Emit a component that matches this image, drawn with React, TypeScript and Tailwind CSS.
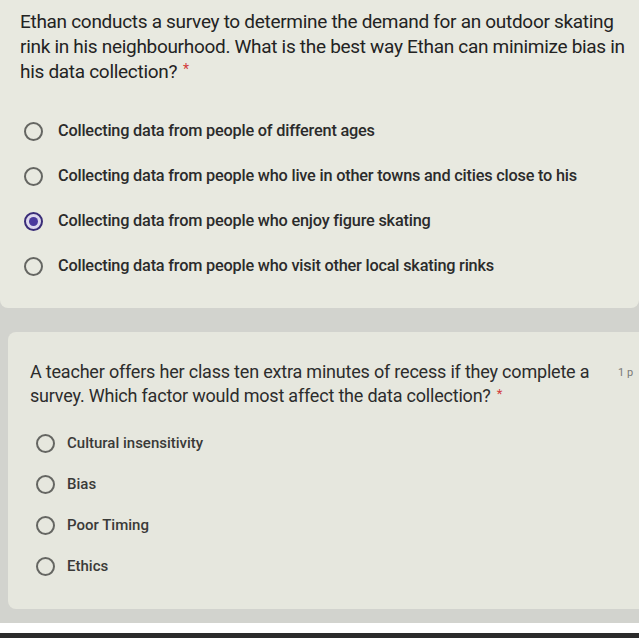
import React from 'react';

const q1Options = [
  'Collecting data from people of different ages',
  'Collecting data from people who live in other towns and cities close to his',
  'Collecting data from people who enjoy figure skating',
  'Collecting data from people who visit other local skating rinks',
];

const q2Options = ['Cultural insensitivity', 'Bias', 'Poor Timing', 'Ethics'];

const Radio: React.FC<{ checked?: boolean }> = ({ checked }) =>
  checked ? (
    <span className="flex h-[19px] w-[19px] shrink-0 items-center justify-center rounded-full border-[2.5px] border-[#3a2d78] bg-[#ddd8ee]">
      <span className="h-[9px] w-[9px] rounded-full bg-[#4b3a9e]" />
    </span>
  ) : (
    <span className="h-[19px] w-[19px] shrink-0 rounded-full border-2 border-[#656662]" />
  );

const App: React.FC = () => {
  return (
    <div className="flex h-[638px] w-[639px] flex-col overflow-hidden bg-[#d2d3ce] font-['Roboto',sans-serif]">
      {/* Question 1 */}
      <div className="h-[308px] shrink-0 rounded-b-lg bg-[#e8e9e0] pl-5 pt-[9px]">
        <p className="w-[608px] text-[19px] leading-[25px] tracking-[-0.3px] text-[#232323]">
          Ethan conducts a survey to determine the demand for an outdoor skating rink in his
          neighbourhood. What is the best way Ethan can minimize bias in his data collection?
          <span className="ml-[6px] inline-block align-top text-[14px] leading-[20px] text-[#d23b3b]">*</span>
        </p>
        <div className="mt-[38px] flex flex-col gap-[26px] pl-[4px]">
          {q1Options.map((o, i) => (
            <div key={o} className="flex h-[19px] items-center gap-[15px]">
              <Radio checked={i === 2} />
              <span className="text-[16.3px] font-medium tracking-[-0.2px] text-[#2b2b2b]">{o}</span>
            </div>
          ))}
        </div>
      </div>

      <div className="h-[24px] shrink-0" />

      {/* Question 2 */}
      <div className="ml-2 h-[277px] shrink-0 rounded-l-lg bg-[#e6e7de] pl-[22px] pt-[28px]">
        <div className="flex items-start">
          <p className="w-[572px] text-[18px] leading-[24px] tracking-[-0.2px] text-[#2c2c2c]">
            A teacher offers her class ten extra minutes of recess if they complete a survey. Which
            factor would most affect the data collection?
            <span className="ml-[6px] inline-block align-top text-[13px] leading-[20px] text-[#d23b3b]">*</span>
          </p>
          <span className="mt-[5px] pl-[16px] text-[11px] text-[#7a7a76]">1 p</span>
        </div>
        <div className="mt-[26px] flex flex-col gap-[22px] pl-[6px]">
          {q2Options.map((o) => (
            <div key={o} className="flex h-[19px] items-center gap-[12px]">
              <Radio />
              <span className="text-[15px] font-medium text-[#3a3a38]">{o}</span>
            </div>
          ))}
        </div>
      </div>

      <div className="h-[14px] shrink-0" />
      <div className="h-[10px] shrink-0 bg-white" />
      <div className="flex-1 bg-[#2b2b2b]" />
    </div>
  );
};

export default App;
